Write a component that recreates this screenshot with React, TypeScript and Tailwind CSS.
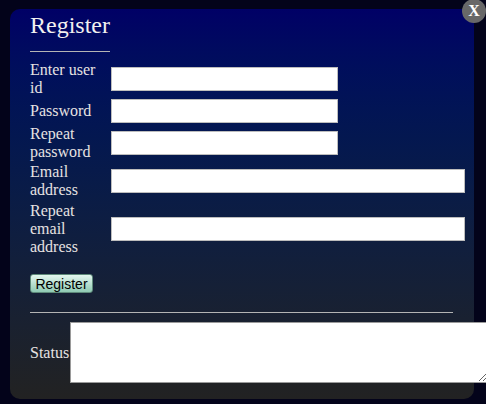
import React from 'react'

const serif = { fontFamily: '"Liberation Serif", "Times New Roman", serif' }

function Row({ label, wide, extra }: { label: string; wide?: boolean; extra?: string }) {
  return (
    <div className={`flex items-center py-px ${extra ?? ''}`}>
      <div className="w-[81px] shrink-0 text-[16px] leading-[18px] text-[#e6e2e2]">{label}</div>
      <input
        type="text"
        className={`h-[24px] bg-white border border-[#bdbdbd] outline-none ${wide ? 'w-[354px]' : 'w-[227px]'}`}
      />
    </div>
  )
}

export default function App() {
  return (
    <div className="relative w-[486px] h-[404px] overflow-hidden bg-[#03031a]" style={serif}>
      <div className="ml-[10px] mt-[9px] w-[464px] h-[390px] rounded-[10px] bg-gradient-to-b from-[#000066] to-[#222222] pl-[20px] pt-[2px]">
        <h2 className="text-[24px] leading-[28px] text-[#f2f0f0]">Register</h2>
        <div className="mt-[12px] w-[80px] h-px bg-[#b4b4b4]" />

        <div className="mt-[8px] flex flex-col">
          <Row label="Enter user id" />
          <Row label="Password" />
          <Row label="Repeat password" />
          <Row label="Email address" wide />
          <Row label="Repeat email address" wide extra="mt-px" />
        </div>

        <button
          className="mt-[17px] block w-[63px] h-[19px] rounded-[3px] border border-[#5e8a7a] bg-gradient-to-b from-[#e4f7ef] to-[#8fcab3] text-[14px] leading-[16px] text-black"
          style={{ fontFamily: '"Liberation Sans", Arial, sans-serif' }}
        >
          Register
        </button>

        <div className="mt-[19px] w-[423px] h-px bg-[#b4b4b4]" />

        <div className="mt-[9px] flex items-center">
          <span className="w-[40px] shrink-0 text-[16px] leading-[18px] text-[#e6e2e2]">Status</span>
          <textarea className="w-[418px] h-[61px] shrink-0 bg-white border border-[#9a9a9a] outline-none" />
        </div>
      </div>

      {/* close button */}
      <div className="absolute left-[462px] top-[-1px] w-[24px] h-[24px] rounded-full bg-[#686868] flex items-center justify-center text-white text-[16px] font-bold leading-none">
        X
      </div>
    </div>
  )
}
